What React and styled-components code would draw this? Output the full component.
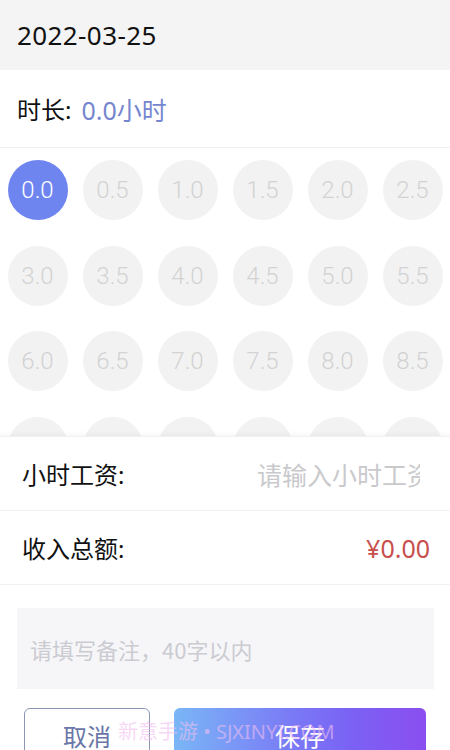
import React from "react";
import styled, { createGlobalStyle } from "styled-components";

const Global = createGlobalStyle`
  html, body { margin: 0; padding: 0; background: #fff; }
  body {
    font-family: "Noto Sans", "Noto Sans CJK SC", sans-serif;
    width: 450px; height: 750px; overflow: hidden;
  }
  * { box-sizing: border-box; }
`;

const Page = styled.div`
  width: 450px;
  height: 750px;
  display: flex;
  flex-direction: column;
  overflow: hidden;
  position: relative;
`;

const Header = styled.div`
  height: 70px;
  background: #f4f4f4;
  display: flex;
  align-items: center;
  padding-left: 17px;
  font-size: 26px;
  color: #111;
  letter-spacing: 0.4px;
  flex-shrink: 0;
`;

const DurationRow = styled.div`
  height: 78px;
  display: flex;
  align-items: center;
  padding-left: 17px;
  font-size: 24px;
  color: #111;
  border-bottom: 1px solid #f0f0f0;
  flex-shrink: 0;
`;

const Accent = styled.span`
  color: #7686cf;
  margin-left: 10px;
  font-size: 25px;
`;

const GridArea = styled.div`
  height: 288px;
  overflow: hidden;
  flex-shrink: 0;
  padding-top: 12px;
`;

const Grid = styled.div`
  display: grid;
  grid-template-columns: repeat(6, 75px);
  grid-auto-rows: 60px;
  row-gap: 25.5px;
  justify-items: center;
`;

const Circle = styled.div`
  width: 60px;
  height: 60px;
  border-radius: 50%;
  display: flex;
  align-items: center;
  justify-content: center;
  font-family: Roboto, "Noto Sans", sans-serif;
  font-weight: 300;
  font-size: 24px;
  background: ${(p) => (p.$active ? "#6e85f0" : "#f2f2f2")};
  color: ${(p) => (p.$active ? "#ffffff" : "#d2d2d2")};
`;

const Panel = styled.div`
  flex: 1;
  background: #fff;
  box-shadow: 0 -2px 4px rgba(0, 0, 0, 0.04);
  border-top: 1px solid #f2f2f2;
  display: flex;
  flex-direction: column;
  position: relative;
  z-index: 1;
`;

const FieldRow = styled.div`
  height: 74px;
  display: flex;
  align-items: center;
  justify-content: space-between;
  padding: 0 20px 0 22px;
  border-bottom: 1px solid #f2f2f2;
  font-size: 24px;
  color: #111;
`;

const Label = styled.span`
  white-space: nowrap;
`;

const WageInput = styled.input`
  width: 163px;
  margin-right: 10px;
  border: none;
  outline: none;
  background: transparent;
  font-family: "Noto Sans CJK SC", sans-serif;
  font-size: 25px;
  color: #111;
  padding: 0;
  &::placeholder { color: #c9c9cc; }
`;

const Amount = styled.span`
  color: #c8504e;
  font-size: 25px;
`;

const Remark = styled.textarea`
  margin: 23px 16px 0 17px;
  height: 81px;
  border: none;
  outline: none;
  resize: none;
  background: #f6f6f8;
  padding: 26px 13px 0;
  font-family: "Noto Sans CJK SC", sans-serif;
  font-size: 22px;
  line-height: 30px;
  color: #111;
  &::placeholder { color: #cbcbd2; }
`;

const Buttons = styled.div`
  display: flex;
  gap: 24px;
  padding: 0 24px;
  margin-top: 19px;
`;

const CancelButton = styled.button`
  width: 126px;
  height: 54px;
  border: 1.5px solid #8c97b3;
  border-radius: 6px;
  background: #fff;
  color: #6877a8;
  font-family: "Noto Sans CJK SC", sans-serif;
  font-size: 24px;
  padding: 0;
  flex-shrink: 0;
`;

const SaveButton = styled.button`
  flex: 1;
  height: 54px;
  border: none;
  border-radius: 6px;
  background: linear-gradient(90deg, #7ab6f6 0%, #7a7cf6 45%, #7a62f4 70%, #8b4ef0 100%);
  color: #fff;
  font-family: "Noto Sans CJK SC", sans-serif;
  font-size: 25px;
  padding: 0;
`;

const Watermark = styled.div`
  position: absolute;
  left: 118px;
  top: 716px;
  font-family: "Noto Sans", "Noto Sans CJK SC", sans-serif;
  font-size: 20px;
  color: rgba(240, 190, 240, 0.6);
  pointer-events: none;
  white-space: nowrap;
  z-index: 2;
`;

const values = [];
for (let i = 0; i < 24; i++) values.push((i * 0.5).toFixed(1));

export default function App() {
  return (
    <>
      <Global />
      <Page>
        <Header>2022-03-25</Header>
        <DurationRow>
          时长:<Accent>0.0小时</Accent>
        </DurationRow>
        <GridArea>
          <Grid>
            {values.map((v, i) => (
              <Circle key={v} $active={i === 0}>{v}</Circle>
            ))}
          </Grid>
        </GridArea>
        <Panel>
          <FieldRow>
            <Label>小时工资:</Label>
            <WageInput placeholder="请输入小时工资" />
          </FieldRow>
          <FieldRow>
            <Label>收入总额:</Label>
            <Amount>¥0.00</Amount>
          </FieldRow>
          <Remark placeholder="请填写备注，40字以内" />
          <Buttons>
            <CancelButton>取消</CancelButton>
            <SaveButton>保存</SaveButton>
          </Buttons>
        </Panel>
        <Watermark>新意手游 • SJXINYI.COM</Watermark>
      </Page>
    </>
  );
}
